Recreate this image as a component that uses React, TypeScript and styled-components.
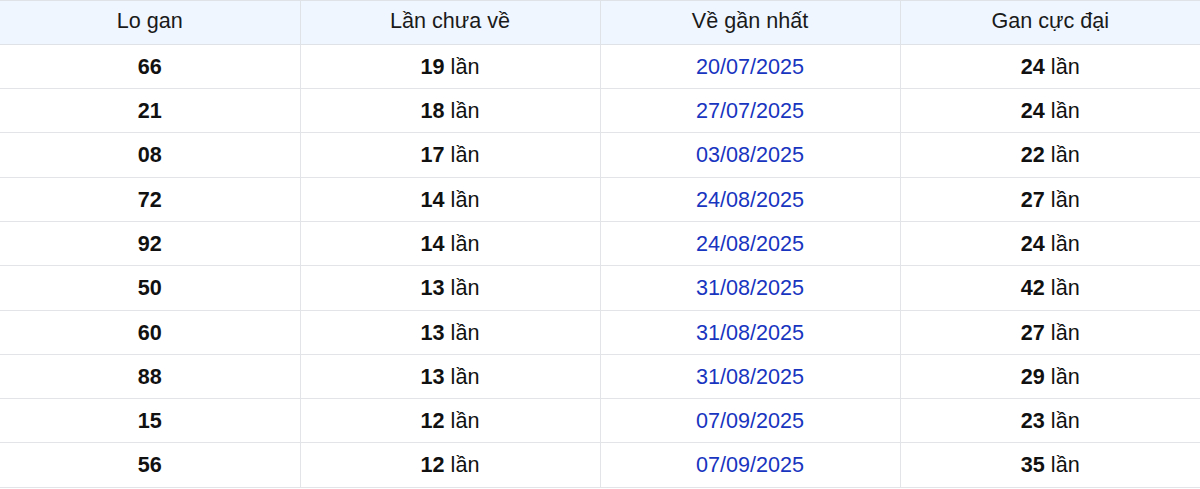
import React from "react";
import styled, { createGlobalStyle } from "styled-components";

const Global = createGlobalStyle`
  html, body { margin: 0; padding: 0; background: #fff; }
  body { font-family: "Liberation Sans", Arial, sans-serif; color: #111; }
`;

const Table = styled.table`
  width: 100%;
  border-collapse: collapse;
  table-layout: fixed;
  font-size: 21.6px;
`;

const Th = styled.th`
  background: #eff6ff;
  font-weight: 400;
  color: #1a1a1a;
  padding: 8px 8px 10.8px;
  line-height: 24px;
  text-align: center;
  border: 1px solid #dfe3e8;
  &:first-child { border-left: none; }
  &:last-child { border-right: none; }
`;

const Td = styled.td<{ $tone?: "date" }>`
  padding: 10px 8px 9.3px;
  line-height: 24px;
  text-align: center;
  border: 1px solid #e2e4e7;
  color: ${(p) => (p.$tone === "date" ? "#1835c0" : "#111")};
  &:first-child { border-left: none; }
  &:last-child { border-right: none; }
`;

const Num = styled.b`
  font-weight: 700;
`;

const rows: [string, number, string, number][] = [
  ["66", 19, "20/07/2025", 24],
  ["21", 18, "27/07/2025", 24],
  ["08", 17, "03/08/2025", 22],
  ["72", 14, "24/08/2025", 27],
  ["92", 14, "24/08/2025", 24],
  ["50", 13, "31/08/2025", 42],
  ["60", 13, "31/08/2025", 27],
  ["88", 13, "31/08/2025", 29],
  ["15", 12, "07/09/2025", 23],
  ["56", 12, "07/09/2025", 35],
];

export default function App() {
  return (
    <>
      <Global />
      <Table>
        <thead>
          <tr>
            <Th>Lo gan</Th>
            <Th>Lần chưa về</Th>
            <Th>Về gần nhất</Th>
            <Th>Gan cực đại</Th>
          </tr>
        </thead>
        <tbody>
          {rows.map(([lo, miss, date, max]) => (
            <tr key={lo}>
              <Td>
                <Num>{lo}</Num>
              </Td>
              <Td>
                <Num>{miss}</Num> lần
              </Td>
              <Td $tone="date">{date}</Td>
              <Td>
                <Num>{max}</Num> lần
              </Td>
            </tr>
          ))}
        </tbody>
      </Table>
    </>
  );
}
